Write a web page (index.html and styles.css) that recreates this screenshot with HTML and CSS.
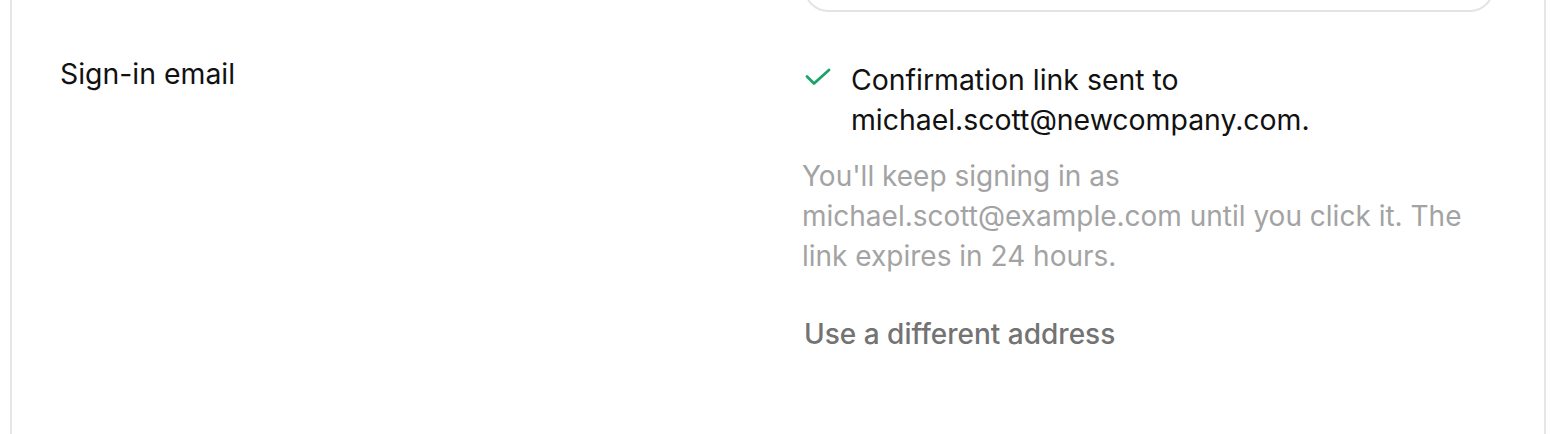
FILE: index.html
```html
<!DOCTYPE html>
<html lang="en">
<head>
<meta charset="utf-8">
<title>Sign-in email</title>
<link rel="stylesheet" href="styles.css">
</head>
<body>
<div class="card">
  <div class="prev-row">
    <div class="spacer"></div>
    <div class="field"></div>
  </div>
  <div class="row">
    <div class="label">Sign-in email</div>
    <div class="content">
      <div class="status">
        <svg class="check" width="28" height="40" viewBox="0 0 28 40" aria-hidden="true">
          <polyline points="3,16.5 10,23.5 25,10" fill="none" stroke="#1ba36c" stroke-width="2.8" stroke-linecap="round" stroke-linejoin="round"/>
        </svg>
        <p class="status-text">Confirmation link sent to michael.scott@newcompany.com.</p>
      </div>
      <p class="hint">You'll keep signing in as michael.scott@example.com until you click it. The link expires in 24 hours.</p>
      <button class="link-btn" type="button">Use a different address</button>
    </div>
  </div>
</div>
</body>
</html>
```

FILE: styles.css
```css
html, body {
  margin: 0;
  padding: 0;
  background: #ffffff;
  height: 100%;
  overflow: hidden;
}

body {
  font-family: Inter, "Noto Sans", sans-serif;
  color: #111111;
}

.card {
  margin: 0 10px;
  height: 100%;
  border-left: 2px solid #e6e6e6;
  border-right: 2px solid #e6e6e6;
  padding: 0 48px;
  box-sizing: border-box;
}

.prev-row,
.row {
  display: grid;
  grid-template-columns: 1fr 694px;
}

.field {
  margin: -40px 2px 0;
  height: 52px;
  border: 2px solid #e4e4e4;
  border-radius: 24px;
  box-sizing: border-box;
}

.label {
  font-size: 28.4px;
  line-height: 40px;
  padding-top: 42px;
}

.content {
  padding-top: 48px;
  display: flex;
  flex-direction: column;
  align-items: flex-start;
}

.status {
  display: flex;
  align-items: flex-start;
  gap: 19px;
  padding-left: 2px;
}

.check {
  flex: none;
  display: block;
}

.status-text {
  margin: 0;
  font-size: 28.4px;
  line-height: 40px;
  color: #111111;
  max-width: 560px;
}

.hint {
  margin: 16px 0 0;
  font-size: 28px;
  line-height: 40px;
  color: #a3a3a3;
  max-width: 680px;
}

.link-btn {
  margin-top: 38px;
  padding: 0 0 0 2px;
  border: 0;
  background: none;
  font-family: inherit;
  font-size: 28px;
  line-height: 40px;
  font-weight: 500;
  color: #737373;
  cursor: pointer;
}
```
